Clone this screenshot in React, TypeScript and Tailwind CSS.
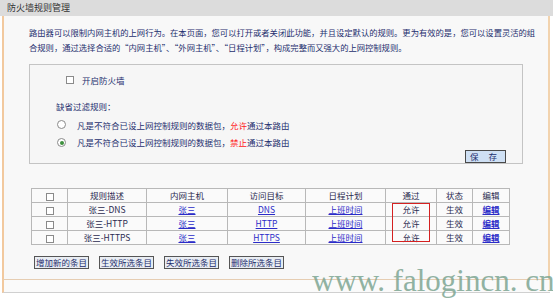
import React from "react";

const F = { fontFamily: '"Noto Sans CJK SC", "Liberation Sans", sans-serif' };

function Box() {
  return <span className="inline-block w-[8px] h-[8px] border border-[#8a8a8a] bg-white" />;
}

function Radio({ on }: { on?: boolean }) {
  return (
    <span className="inline-flex items-center justify-center w-[9px] h-[9px] rounded-full border border-[#8a8a8a] bg-white">
      {on && <span className="w-[4px] h-[4px] rounded-full bg-[#3d8f3d]" />}
    </span>
  );
}

const rows = [
  { d: "张三-DNS", t: "DNS" },
  { d: "张三-HTTP", t: "HTTP" },
  { d: "张三-HTTPS", t: "HTTPS" },
];

const cell = "border border-[#b8b8b8] text-center p-0 h-[14px] leading-[13px]";
const link = "text-[#2b2bc8] underline";

export default function App() {
  return (
    <div
      className="relative w-[553px] h-[299px] overflow-hidden bg-white text-[8.5px] text-[#1e2f6e]"
      style={F}
    >
      <div className="h-[16px] bg-[#dcdcdc] pl-[7px] leading-[16px] text-[9px] text-[#333]">防火墙规则管理</div>
      <div className="ml-[2px] w-[548px] h-[264px] border-l-2 border-r-2 border-b border-l-[#f2c99e] border-r-[#f2d3ae] border-b-[#e6cdb2] bg-[#f8f8f8]">
        <div className="pl-[25px] pt-[9px] leading-[14.5px] w-[530px] text-[8.3px]">
          <div className="whitespace-nowrap">路由器可以限制内网主机的上网行为。在本页面，您可以打开或者关闭此功能，并且设定默认的规则。更为有效的是，您可以设置灵活的组</div>
          <div className="whitespace-nowrap">合规则，通过选择合适的“内网主机”、“外网主机”、“日程计划”，构成完整而又强大的上网控制规则。</div>
        </div>
        <div className="ml-[25px] mt-[10px] w-[494px] h-[100px] border border-[#c4c4c4] bg-[#f6f6f6] relative">
          <div className="flex items-center pl-[36px] pt-[9px]">
            <Box />
            <span className="ml-[8px]">开启防火墙</span>
          </div>
          <div className="pl-[26px] mt-[13px]">缺省过滤规则：</div>
          <div className="flex items-center pl-[27px] mt-[6px]">
            <Radio />
            <span className="ml-[11px]">凡是不符合已设上网控制规则的数据包，<span className="text-[#ff2020]">允许</span>通过本路由</span>
          </div>
          <div className="flex items-center pl-[27px] mt-[5px]">
            <Radio on />
            <span className="ml-[11px]">凡是不符合已设上网控制规则的数据包，<span className="text-[#ff2020]">禁止</span>通过本路由</span>
          </div>
          <div className="flex justify-end pr-[16px] mt-[1px]">
            <button className="w-[41px] h-[13px] border border-[#4a4a4a] bg-[#cfe0f4] text-[8.5px] leading-[11px] text-[#1e2f6e] tracking-[4px]">保 存</button>
          </div>
        </div>
        <table className="ml-[27px] mt-[24px] border-collapse bg-[#fafafa] text-[#2a2a50]">
          <tbody>
            <tr>
              <td className={cell + " w-[36px]"}><span className="inline-flex align-middle"><Box /></span></td>
              <td className={cell + " w-[79px]"}>规则描述</td>
              <td className={cell + " w-[81px]"}>内网主机</td>
              <td className={cell + " w-[78px]"}>访问目标</td>
              <td className={cell + " w-[80px]"}>日程计划</td>
              <td className={cell + " w-[51px]"}>通过</td>
              <td className={cell + " w-[36px]"}>状态</td>
              <td className={cell + " w-[37px]"}>编辑</td>
            </tr>
            {rows.map((r) => (
              <tr key={r.d}>
                <td className={cell}><span className="inline-flex align-middle"><Box /></span></td>
                <td className={cell}>{r.d}</td>
                <td className={cell}><span className={link}>张三</span></td>
                <td className={cell}><span className={link}>{r.t}</span></td>
                <td className={cell}><span className={link}>上班时间</span></td>
                <td className={cell}>允许</td>
                <td className={cell}>生效</td>
                <td className={cell}><span className={link + " font-bold"}>编辑</span></td>
              </tr>
            ))}
          </tbody>
        </table>
        <div className="flex gap-[10px] ml-[30px] mt-[11px]">
          {["增加新的条目", "生效所选条目", "失效所选条目", "删除所选条目"].map((b) => (
            <button
              key={b}
              className="w-[55px] h-[13px] border border-[#555] bg-[#e9edf3] text-[8.5px] leading-[11px] text-[#1e2f6e] px-0 whitespace-nowrap"
            >
              {b}
            </button>
          ))}
        </div>
      </div>
      <div className="ml-[2px] w-[548px] h-[13px] border-l-2 border-b border-l-[#f2c99e] border-b-[#d0d0d0] bg-[#fafafa]" />
      <div className="absolute left-[392px] top-[203px] w-[38px] h-[39px] border-[1.5px] border-[#d42020]" />
      <div
        className="absolute left-[312px] top-[265px] text-[31px] leading-none text-[#7ea693] opacity-85 whitespace-nowrap"
        style={{ fontFamily: '"Liberation Serif", serif' }}
      >
        www. falogincn. cn
      </div>
    </div>
  );
}
